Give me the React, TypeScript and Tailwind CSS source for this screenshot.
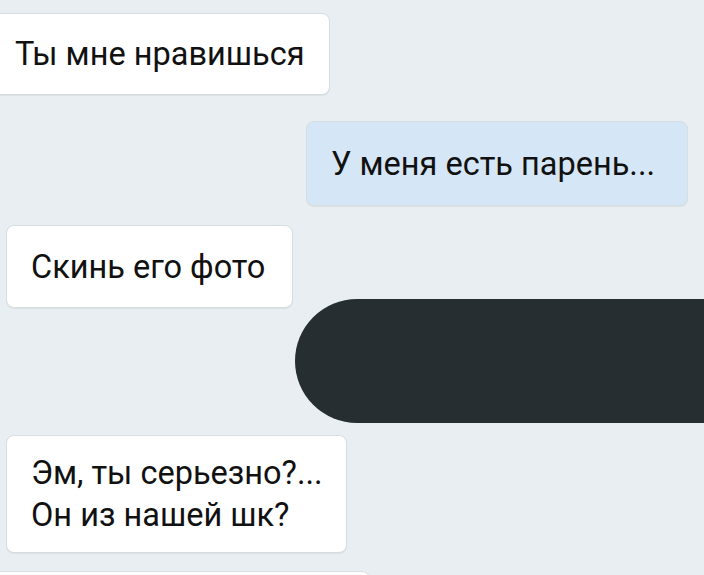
const font = { fontFamily: "Roboto, 'Noto Sans', sans-serif" };

interface BubbleProps {
  children: React.ReactNode;
  className?: string;
}

function Bubble({ children, className = "" }: BubbleProps) {
  return (
    <div
      className={`shrink-0 whitespace-nowrap rounded-lg border border-[#d6dee2] px-[24px] text-[32.5px] leading-[42px] text-[#111] shadow-[0_1px_1px_rgba(0,0,0,0.06)] ${className}`}
    >
      {children}
    </div>
  );
}

export default function App() {
  return (
    <div
      className="flex h-[575px] w-[704px] flex-col items-start overflow-hidden bg-[#e8eef1] pt-[13px]"
      style={font}
    >
      <Bubble className="-ml-[10px] flex h-[82px] w-[340px] items-center bg-white">
        Ты мне нравишься
      </Bubble>

      <Bubble className="ml-[306px] mt-[26px] flex h-[85px] w-[382px] items-center border-[#bfd0de] bg-[#d5e6f6]">
        У меня есть парень...
      </Bubble>

      <Bubble className="ml-[6px] mt-[19px] flex h-[83px] w-[287px] items-center bg-white">
        Скинь его фото
      </Bubble>

      {/* redaction blob */}
      <div className="relative ml-[295px] mt-[-9px] h-[124px] w-[420px] shrink-0 rounded-l-full bg-[#272e31]" />

      <Bubble className="ml-[6px] mt-[12px] flex h-[118px] w-[341px] flex-col justify-center bg-white">
        <span>Эм, ты серьезно?...</span>
        <span>Он из нашей шк?</span>
      </Bubble>

      <Bubble className="-ml-[10px] mt-[18px] h-[60px] w-[380px] bg-white">
        {""}
      </Bubble>
    </div>
  );
}
